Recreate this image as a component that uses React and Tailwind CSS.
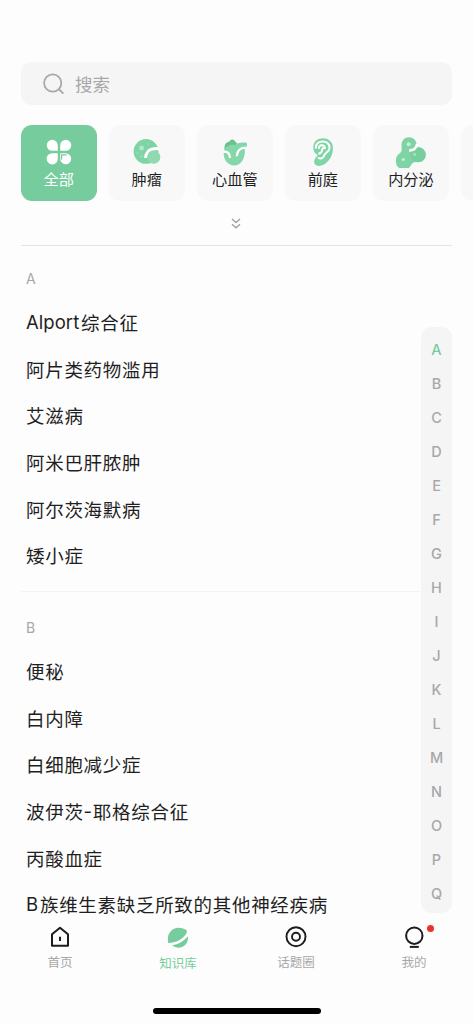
import React, { useState } from 'react';

const SearchIcon = () => (
  <svg width="22" height="22" viewBox="0 0 22 22" fill="none" stroke="#a8a8a8" strokeWidth="1.8">
    <circle cx="9.7" cy="10" r="8.6" />
    <path d="m15.700 16 4.700 4.600" />
  </svg>
);

const AllIcon = () => (
  <svg width="26" height="26" viewBox="0 0 26 26">
    <path d="M6.2 0.8h0a5.6 5.6 0 0 1 5.6 5.6v5.4H6.2a5.5 5.5 0 0 1 0-11Z" fill="#fff" />
    <path d="M19.8 0.8a5.5 5.5 0 0 1 0 11h-5.6V6.4a5.6 5.6 0 0 1 5.6-5.6Z" fill="#fff" />
    <path d="M6.2 14.2h5.6v5.4a5.6 5.6 0 1 1-5.6-5.4Z" fill="#fff" />
    <path d="M14.2 14.2h5.6a5.5 5.5 0 1 1-5.6 5.4Z" fill="#fff" />
    <path d="M15.6 20.5v-4.7h5" fill="none" stroke="#77cc9d" strokeWidth="1.3" />
  </svg>
);

const TumorIcon = () => (
  <svg width="28" height="28" viewBox="0 0 28 28">
    <circle cx="13" cy="13.4" r="12.4" fill="#7fd4a5" />
    <path d="M12.6 20c.2-5.700 3.800-9.200 9.200-9.200H29" fill="none" stroke="#f8f8f8" strokeWidth="2.900" />
    <circle cx="20.8" cy="19.200" r="6.500" fill="#8fdab0" />
    <path d="M12.6 20c.2-5.700 3.800-9.200 9.200-9.200h4" fill="none" stroke="#fff" strokeWidth="2.500" />
    <circle cx="8.6" cy="10" r="2.4" fill="#b2e9c9" />
    <circle cx="15.5" cy="6" r="1" fill="#97ddb6" />
    <circle cx="4.5" cy="15" r="1" fill="#97ddb6" />
    <circle cx="8.5" cy="18.3" r="1.2" fill="#97ddb6" />
  </svg>
);

const HeartIcon = () => (
  <svg width="28" height="28" viewBox="0 0 28 28">
    <path d="M3.500 11.500c-.4-3.500.7-6.500 3.500-7.500l1.500-.4a3 3 0 0 1 5.600-.2l2 1.800-4 8H4Z" fill="#67c38e" />
    <path d="M2.800 13.500C4.500 8 9.500 6 14 7.200c3-2.800 7-3 11.700-2.400.8 2.300.2 4.200-2 5.500 1.200 9-3.100 17.100-10.200 17.100C6.500 27.400 2 21.500 2.800 13.500Z" fill="#84d7a8" />
    <path d="M2 13.500c4.500-.2 7 1.800 7 6.400" fill="none" stroke="#fff" strokeWidth="2.3" />
    <path d="M15.800 18.300c.2-5.300 3.300-8.300 8.700-8.600" fill="none" stroke="#fff" strokeWidth="2.3" />
  </svg>
);

const EarIcon = () => (
  <svg width="28" height="28" viewBox="0 0 28 28">
    <path d="M4.3 9C4.6 3.4 8.6.2 14.2.2 20.2.2 24 4.5 24 10.3c0 9.500-7 17.600-14.300 17.600-3 0-5-2.100-4.500-4.800.4-2.600 2.200-4.200 3.700-6C5.600 15.900 4.100 12.700 4.300 9Z" fill="#80d5a6" />
    <path d="M6.9 9.8c-.6-8.300 13.900-8.700 13.700 0-.1 4.400-5.100 5.100-5.800 8.100-.4 2-2.400 3.100-5.100 2.200" fill="none" stroke="#fff" strokeWidth="2" strokeLinecap="round" />
    <path d="M9.8 10.100c.2-3.300 6.300-4 6-.1-.9-.2-2.400.2-2.600 1.500-.3 1.500-.2 3.200-3.100 4" fill="none" stroke="#fff" strokeWidth="2" strokeLinecap="round" />
  </svg>
);

const EndocrineIcon = () => (
  <svg width="32" height="32" viewBox="0 0 32 32">
    <path d="M14 1.200c4.500 0 7.500 3.300 7.500 7.200 0 2 .8 2.700 3 3.100 3.800.6 6.400 3.500 6.400 7.200 0 4.700-4.100 8.200-8.900 7.400-3.400-.5-4.400 1-5.900 2.900A8 8 0 0 1 1 25.200c-.5-3.300 1-5.900 3.500-7.600 2.500-1.800 2.300-3.300 2-7.300C6 5 9.200 1.200 14 1.200Z" fill="#7ed4a4" />
    <circle cx="22.7" cy="18.7" r="7.600" fill="#74ca99" opacity=".6" />
    <path d="M14.200 14.400c4.500.2 7-1.700 7.900-6.300" fill="none" stroke="#fff" strokeWidth="2.6" />
    <circle cx="13.6" cy="8.3" r="2" fill="#c6efd6" />
    <circle cx="8.3" cy="23.5" r="1.6" fill="#c6efd6" />
    <circle cx="19.6" cy="18.6" r="1.5" fill="#a5e2be" />
  </svg>
);

const HomeIcon = () => (
  <svg width="22" height="22" viewBox="0 0 22 22" fill="none" stroke="#1c1c1c" strokeWidth="2">
    <path d="M3 8.200 11 1.700l8 6.500v11.500H3Z" strokeLinejoin="round" />
    <path d="M11 10.700v4.300" />
  </svg>
);

const PlanetIcon = () => (
  <svg width="22" height="22" viewBox="0 0 22 22" fill="#77cc9d">
    <path d="M1.400 17C-.8 9.500 3.700 1.700 11.500 1.700c3.300 0 6 1 8.200 2.600.5 1.300-.1 2.900-1.600 5-3.200 4.500-10.600 8-16.700 7.700Z" />
    <path d="M5.200 19.200c6.300-.8 11.800-4.200 15.700-9 1.100 6-3.500 11.500-9.500 11.500-2.400 0-4.500-1-6.200-2.500Z" />
  </svg>
);

const TopicIcon = () => (
  <svg width="22" height="22" viewBox="0 0 22 22" fill="none" stroke="#1c1c1c" strokeWidth="1.9">
    <circle cx="11" cy="10.7" r="9.5" />
    <circle cx="11" cy="10.7" r="4" />
  </svg>
);

const MineIcon = () => (
  <svg width="22" height="22" viewBox="0 0 22 22" fill="none" stroke="#1c1c1c" strokeWidth="2">
    <circle cx="11.300" cy="9.7" r="8.2" />
    <path d="M6.800 20.900h9" />
  </svg>
);

const categories = [
  { name: '全部', icon: <AllIcon /> },
  { name: '肿瘤', icon: <TumorIcon /> },
  { name: '心血管', icon: <HeartIcon /> },
  { name: '前庭', icon: <EarIcon /> },
  { name: '内分泌', icon: <EndocrineIcon /> },
  { name: '', icon: null },
];

const groupA = ['Alport综合征', '阿片类药物滥用', '艾滋病', '阿米巴肝脓肿', '阿尔茨海默病', '矮小症'];
const groupB = ['便秘', '白内障', '白细胞减少症', '波伊茨-耶格综合征', '丙酸血症', 'B族维生素缺乏所致的其他神经疾病'];

const letters = 'ABCDEFGHIJKLMNOPQ'.split('');

const tabs = [
  { name: '首页', icon: <HomeIcon /> },
  { name: '知识库', icon: <PlanetIcon /> },
  { name: '话题圈', icon: <TopicIcon /> },
  { name: '我的', icon: <MineIcon />, dot: true },
];

// latin runs and hyphens use the latin font, with a thin gap after a leading word
const DiseaseName = ({ text }) =>
  text.split(/([A-Za-z]+|-)/).filter(Boolean).map((part, i) => {
    if (part === '-') {
      return <span key={i} className="font-['Inter',sans-serif]">-</span>;
    }
    if (/^[A-Za-z]/.test(part)) {
      return <span key={i} className="mr-[1.8px] font-['Inter',sans-serif] tracking-[0.05px]">{part}</span>;
    }
    return <span key={i}>{part}</span>;
  });

const DiseaseList = ({ items }) => (
  <ul>
    {items.map((item) => (
      <li key={item} className="flex h-[46.7px] items-center whitespace-nowrap pb-[1.5px] pl-[5px] text-[18.5px] leading-none tracking-[0.7px] text-[#1f1f1f]">
        <DiseaseName text={item} />
      </li>
    ))}
  </ul>
);

const App = () => {
  const [category, setCategory] = useState('全部');
  const [letter, setLetter] = useState('A');
  const [tab, setTab] = useState('知识库');

  return (
    <div className="relative flex h-[1024px] w-[473px] flex-col overflow-hidden bg-[#fdfdfd] pt-[62px] font-['Noto_Sans_CJK_SC',sans-serif]">
      <div className="ml-[20.5px] mr-[21px] flex h-[43px] shrink-0 items-center rounded-[10px] bg-[#f5f5f5] pl-[22px]">
        <SearchIcon />
        <span className="ml-[10.5px] text-[17.5px] leading-none text-[#a8a8a8]">搜索</span>
      </div>

      <div className="mt-5 flex shrink-0 gap-[12.2px] overflow-hidden pl-[20.7px]">
        {categories.map((c) => (
          <button
            key={c.name}
            onClick={() => setCategory(c.name)}
            className={`flex h-[76px] w-[75.9px] shrink-0 flex-col items-center rounded-[11px] pt-[10px] ${
              category === c.name ? 'bg-[#77cc9d] text-white' : 'bg-[#f8f8f8] text-[#1f1f1f]'
            }`}
          >
            <span className="flex h-[33px] items-center">{c.icon}</span>
            <span className="mt-[1.5px] text-[15.2px] leading-[16px]">{c.name}</span>
          </button>
        ))}
      </div>

      <div className="flex h-[44px] shrink-0 items-center justify-center pr-[1px]">
        <svg width="10" height="12" viewBox="0 0 10 12" fill="none" stroke="#a0a0a0" strokeWidth="1.4">
          <path d="m1 2 4 3.500L9 2M1 7.200l4 3.500 4-3.500" />
        </svg>
      </div>

      <main className="min-h-0 flex-1 overflow-hidden pl-[21px] pr-[21px]">
        <section className="border-t border-[#e4e4e4] pb-[11px]">
          <h2 className="flex h-[53.7px] items-center pl-[5px] pt-[12px] font-['Inter',sans-serif] text-[14px] text-[#a8a8a8]">A</h2>
          <DiseaseList items={groupA} />
        </section>
        <section className="border-t border-[#f3f3f3]">
          <h2 className="flex h-[56.7px] items-center pl-[5px] pt-[15px] font-['Inter',sans-serif] text-[14px] text-[#a8a8a8]">B</h2>
          <DiseaseList items={groupB} />
        </section>
      </main>

      {/* letter index floats over the list */}
      <aside className="absolute right-[21px] top-[327px] flex h-[586px] w-[31px] flex-col rounded-[10px] bg-[#f5f5f5] pt-[6px]">
        {letters.map((l) => (
          <button
            key={l}
            onClick={() => setLetter(l)}
            className={`flex h-[34px] w-full shrink-0 items-center justify-center font-['Inter',sans-serif] text-[14.5px] font-medium ${
              letter === l ? 'text-[#77cc9d]' : 'text-[#a8a8a8]'
            }`}
          >
            {l}
          </button>
        ))}
      </aside>

      <nav className="flex h-[106px] shrink-0 flex-col items-center bg-[#fdfdfd]">
        <div className="flex h-[90px] w-full pl-[1px]">
          {tabs.map((t) => (
            <button key={t.name} onClick={() => setTab(t.name)} className="flex flex-1 flex-col items-center pt-[8px]">
              <span className="relative">
                {t.icon}
                {t.dot && <span className="absolute -right-[9px] -top-[1px] size-[7px] rounded-full bg-[#f0302a]" />}
              </span>
              <span className={`text-[12.5px] leading-[14px] ${tab === t.name ? 'mt-[8px] text-[#77cc9d]' : 'mt-[7px] text-[#a8a8a8]'}`}>
                {t.name}
              </span>
            </button>
          ))}
        </div>
        <div className="h-[6px] w-[168px] rounded-full bg-black" />
      </nav>
    </div>
  );
};

export default App;
